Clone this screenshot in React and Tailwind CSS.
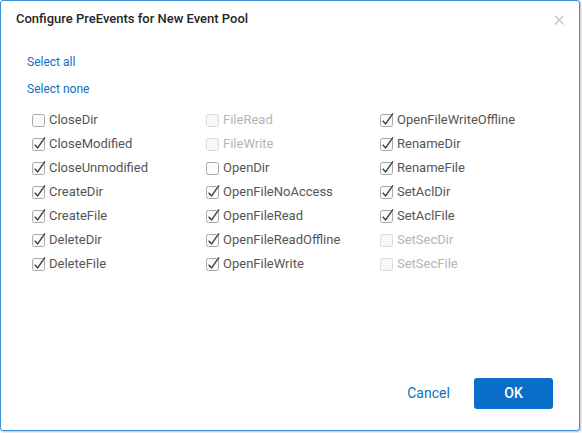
import React, { useState } from 'react'

const EVENTS = [
    { name: 'CloseDir', checked: false },
    { name: 'FileRead', checked: false, disabled: true },
    { name: 'OpenFileWriteOffline', checked: true },
    { name: 'CloseModified', checked: true },
    { name: 'FileWrite', checked: false, disabled: true },
    { name: 'RenameDir', checked: true },
    { name: 'CloseUnmodified', checked: true },
    { name: 'OpenDir', checked: false },
    { name: 'RenameFile', checked: true },
    { name: 'CreateDir', checked: true },
    { name: 'OpenFileNoAccess', checked: true },
    { name: 'SetAclDir', checked: true },
    { name: 'CreateFile', checked: true },
    { name: 'OpenFileRead', checked: true },
    { name: 'SetAclFile', checked: true },
    { name: 'DeleteDir', checked: true },
    { name: 'OpenFileReadOffline', checked: true },
    { name: 'SetSecDir', checked: false, disabled: true },
    { name: 'DeleteFile', checked: true },
    { name: 'OpenFileWrite', checked: true },
    { name: 'SetSecFile', checked: false, disabled: true },
]

const CheckBox = ({ checked, disabled }) => (
    <svg width="16" height="16" viewBox="0 0 16 16" className="shrink-0 overflow-visible">
        <rect
            x="1.5" y="2.5" width="12" height="12" rx="2"
            fill={disabled ? '#f8f8f8' : '#fafafa'}
            stroke={disabled ? '#dadada' : '#a8a8a8'}
        />
        {checked && (
            <path d="M3.6 8.8 L6.6 11.9 L14 1.4" fill="none" stroke="#454545" strokeWidth="1.5" />
        )}
    </svg>
)

const App = () => {
    const [events, setEvents] = useState(EVENTS)

    const toggle = (i) => {
        setEvents(events.map((e, idx) => (idx === i && !e.disabled ? { ...e, checked: !e.checked } : e)))
    }
    const setAll = (val) => setEvents(events.map(e => (e.disabled ? e : { ...e, checked: val })))

    return (
        <div className="w-[582px] h-[433px] bg-white" style={{ fontFamily: 'Roboto, "Liberation Sans", sans-serif' }}>
            <div className="w-[580px] h-[431px] flex flex-col bg-white border border-[#3a8ee0] rounded-[3px] shadow-[1px_1px_2px_rgba(0,0,0,0.25)]">
                {/* Header */}
                <div className="h-[36px] flex items-center justify-between pl-[15px] pr-[14px]">
                    <h2 className="text-[13px] font-medium text-[#262626]">Configure PreEvents for New Event Pool</h2>
                    <button className="text-[#c8c8c8] text-[22px] leading-none font-light">×</button>
                </div>

                {/* Body */}
                <div className="flex-1 pl-[26px] pt-[17px]">
                    <div className="flex flex-col items-start gap-[11px] text-[12px] leading-[16px] text-[#106ebe]">
                        <button onClick={() => setAll(true)}>Select all</button>
                        <button onClick={() => setAll(false)}>Select none</button>
                    </div>
                    <div className="grid grid-cols-[174px_174px_174px] pl-[4px] mt-[11px]">
                        {events.map((e, i) => (
                            <label
                                key={e.name}
                                onClick={() => toggle(i)}
                                className={`h-[24px] flex items-center gap-[2px] text-[13px] cursor-pointer ${e.disabled ? 'text-[#b4b4b4]' : 'text-[#555]'}`}
                            >
                                <CheckBox checked={e.checked} disabled={e.disabled} />
                                <span>{e.name}</span>
                            </label>
                        ))}
                    </div>
                </div>

                {/* Footer */}
                <div className="flex justify-end gap-[6px] pr-[26px] pb-[21px]">
                    <button className="w-[79px] h-[31px] text-[14px] text-[#106ebe]">Cancel</button>
                    <button className="w-[79px] h-[31px] text-[14px] font-medium text-white bg-[#0b6ec9] rounded-[3px]">OK</button>
                </div>
            </div>
        </div>
    )
}

export default App
